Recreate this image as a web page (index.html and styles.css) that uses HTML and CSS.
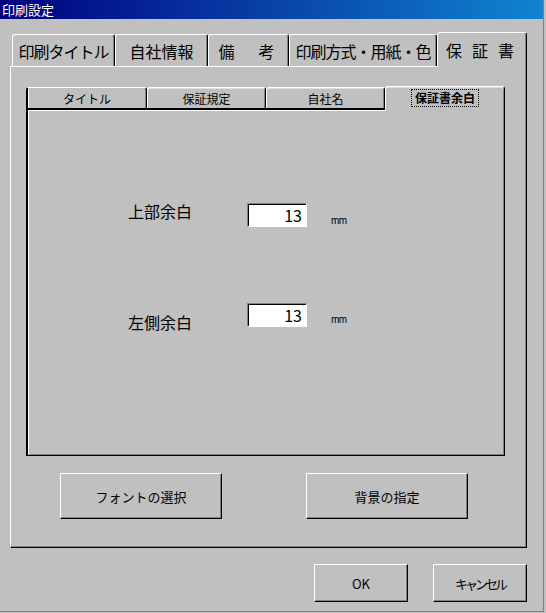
FILE: index.html
```html
<!DOCTYPE html>
<html lang="ja">
<head>
  <meta charset="UTF-8" />
  <title>印刷設定</title>
  <link rel="stylesheet" href="styles.css">
</head>
<body>
  <div class="window">
    <div class="titlebar">印刷設定</div>

    <div class="client">
      <div class="tabs">
        <div class="tab tab-title tight">印刷タイトル</div>
        <div class="tab tab-company">自社情報</div>
        <div class="tab tab-note">備　考</div>
        <div class="tab tab-print tight">印刷方式・用紙・色</div>
        <div class="tab tab-warranty active">保証書</div>
      </div>

      <div class="panel">
        <div class="subtabs">
          <div class="subtab first">タイトル</div>
          <div class="subtab">保証規定</div>
          <div class="subtab">自社名</div>
          <div class="subtab active"><span class="focus">保証書余白</span></div>
        </div>

        <div class="subpanel">
          <div class="field">
            <label class="field-label">上部余白</label>
            <input class="num" type="text" value="13" readonly />
            <span class="unit">mm</span>
          </div>
          <div class="field low">
            <label class="field-label">左側余白</label>
            <input class="num" type="text" value="13" readonly />
            <span class="unit">mm</span>
          </div>
        </div>

        <div class="panel-buttons">
          <button class="btn btn-wide">フォントの選択</button>
          <button class="btn btn-wide">背景の指定</button>
        </div>
      </div>

      <div class="actions">
        <button class="btn btn-small">OK</button>
        <button class="btn btn-small cancel">キャンセル</button>
      </div>
    </div>
  </div>
</body>
</html>
```

FILE: styles.css
```css
* {
  box-sizing: border-box;
  margin: 0;
  padding: 0;
}

body {
  width: 546px;
  height: 613px;
  overflow: hidden;
  background: #c0c0c0;
  color: #000;
  font-family: "Noto Sans CJK JP", "Liberation Sans", sans-serif;
}

.window {
  width: 544px;
  height: 612px;
  border-right: 1px solid #808080;
  border-bottom: 1px solid #808080;
}

.titlebar {
  height: 19px;
  line-height: 19px;
  padding-left: 2px;
  color: #fff;
  font-size: 13px;
  background: linear-gradient(to right, #000080, #1084d0);
}

.client {
  padding: 13px 16px 0 10px;
}

/* outer tab strip */
.tabs {
  display: flex;
  align-items: flex-end;
  height: 34px;
  padding-left: 2px;
}

.tab {
  height: 32px;
  display: flex;
  align-items: center;
  justify-content: center;
  font-size: 16px;
  white-space: nowrap;
  background: #c0c0c0;
  border-top: 1px solid #fff;
  border-left: 1px solid #fff;
  border-right: 1px solid #000;
  border-radius: 3px 3px 0 0;
  box-shadow: inset -1px 0 0 #808080;
}

.tab.tight {
  letter-spacing: -1px;
}

.tab.active {
  height: 35px;
  margin-bottom: -1px;
  position: relative;
  z-index: 1;
  letter-spacing: 10px;
  padding-left: 6px;
}

.tab-title { width: 103px; }
.tab-company { width: 93px; }
.tab-note { width: 81px; letter-spacing: 4px; }
.tab-print { width: 148px; }
.tab-warranty { width: 90px; }

.panel {
  height: 482px;
  padding: 19px 21px 0 15px;
  border-top: 1px solid #fff;
  border-left: 1px solid #fff;
  border-right: 1px solid #000;
  border-bottom: 1px solid #000;
  box-shadow: inset -1px -1px 0 #808080;
}

/* inner tab strip */
.subtabs {
  display: flex;
  align-items: flex-end;
  height: 22px;
}

.subtab {
  width: 119px;
  height: 21px;
  display: flex;
  align-items: center;
  justify-content: center;
  font-size: 12px;
  background: #c0c0c0;
  border-top: 1px solid #fff;
  border-left: 1px solid #fff;
  border-right: 1px solid #000;
  border-radius: 3px 3px 0 0;
  box-shadow: inset 0 1px 0 #dfdfdf, inset -1px 0 0 #808080;
}

.subtab.first {
  width: 121px;
  border-left: 2px solid #000;
  box-shadow: inset 1px 0 0 #fff, inset -1px 0 0 #808080;
}

.subtab.active {
  width: 120px;
  height: 25px;
  margin-bottom: -3px;
  position: relative;
  z-index: 1;
  font-weight: bold;
  padding-bottom: 3px;
}

.focus {
  outline: 1px dotted #000;
  padding: 0 3px;
  line-height: 16px;
}

.subpanel {
  height: 348px;
  padding: 92px 0 0 100px;
  border-top: 2px solid #000;
  border-left: 2px solid #000;
  border-right: 1px solid #000;
  border-bottom: 1px solid #000;
  box-shadow: inset 1px 1px 0 #fff, inset -1px -1px 0 #808080;
}

.field {
  display: flex;
  align-items: flex-start;
  height: 26px;
}

.field + .field {
  margin-top: 75px;
}

.field-label {
  width: 119px;
  font-size: 16px;
  line-height: 18px;
}

.num {
  width: 60px;
  height: 24px;
  margin-top: 1px;
  padding-right: 4px;
  text-align: right;
  font-family: "Noto Sans CJK JP", sans-serif;
  font-size: 16px;
  background: #fff;
  border-top: 1px solid #808080;
  border-left: 1px solid #808080;
  border-right: 1px solid #fff;
  border-bottom: 1px solid #fff;
  box-shadow: inset 1px 1px 0 #000;
  outline: none;
}

.unit {
  margin: 13px 0 0 24px;
  font-family: "Liberation Sans", sans-serif;
  font-size: 10px;
  line-height: 11px;
  letter-spacing: -0.5px;
}

.field.low .field-label { margin-top: 10px; }
.field.low .num { margin-top: 0; }
.field.low .unit { margin-top: 11px; }

.btn {
  display: flex;
  align-items: center;
  justify-content: center;
  font-family: "Noto Sans CJK JP", "Liberation Sans", sans-serif;
  font-size: 13px;
  color: #000;
  background: #c0c0c0;
  border-top: 1px solid #fff;
  border-left: 1px solid #fff;
  border-right: 1px solid #000;
  border-bottom: 1px solid #000;
  box-shadow: inset -1px -1px 0 #808080;
}

.panel-buttons {
  display: flex;
  gap: 84px;
  margin: 17px 0 0 34px;
}

.btn-wide {
  width: 162px;
  height: 46px;
}

.actions {
  display: flex;
  justify-content: flex-end;
  gap: 25px;
  margin-top: 16px;
}

.btn-small {
  width: 94px;
  height: 38px;
}

.cancel {
  letter-spacing: -3px;
}
```
